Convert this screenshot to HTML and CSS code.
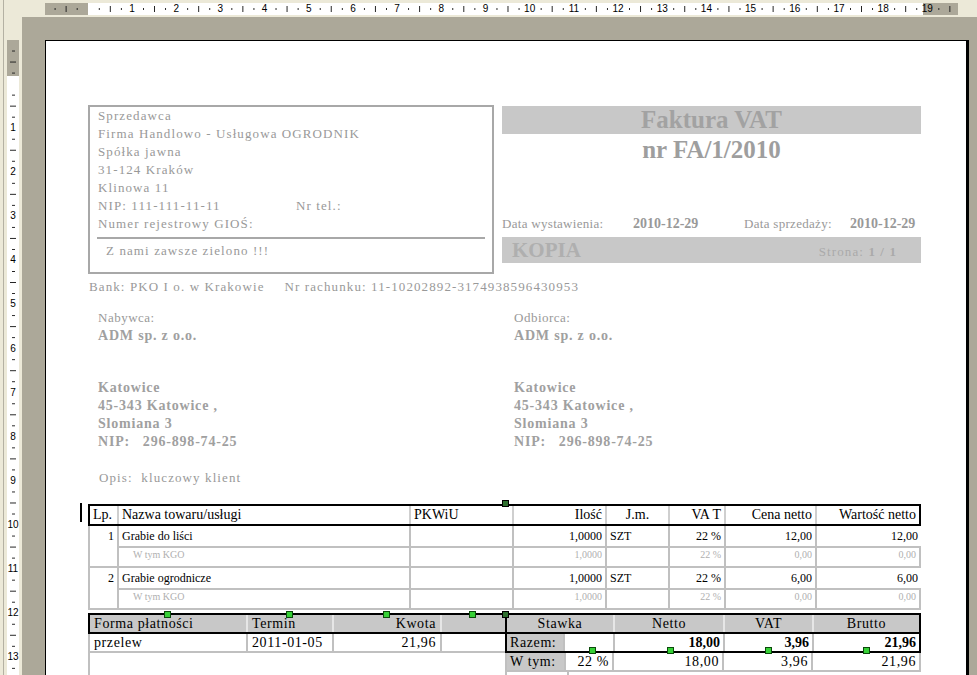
FILE: index.html
```html
<!DOCTYPE html>
<html lang="pl">
<head>
  <meta charset="UTF-8">
  <title>Faktura VAT - podgląd</title>
  <link rel="stylesheet" href="styles.css">
</head>
<body>
<div class="topbar">
  <div class="hruler">
    <span>1</span><span>2</span><span>3</span><span>4</span><span>5</span><span>6</span><span>7</span><span>8</span><span>9</span><span>10</span>
    <span>11</span><span>12</span><span>13</span><span>14</span><span>15</span><span>16</span><span>17</span><span>18</span><span>19</span>
  </div>
</div>

<div class="main">
  <div class="side">
    <div class="vruler">
      <span>1</span><span>2</span><span>3</span><span>4</span><span>5</span><span>6</span><span>7</span>
      <span>8</span><span>9</span><span>10</span><span>11</span><span>12</span><span>13</span>
    </div>
  </div>

  <div class="workspace">
    <div class="page">
      <div class="top">
        <div class="seller">
          <div>Sprzedawca</div>
          <div>Firma Handlowo - Usługowa OGRODNIK</div>
          <div>Spółka jawna</div>
          <div>31-124 Kraków</div>
          <div>Klinowa 11</div>
          <div class="nip-row"><span class="nip">NIP: 111-111-11-11</span><span>Nr tel.:</span></div>
          <div>Numer rejestrowy GIOŚ:</div>
          <div class="motto">Z nami zawsze zielono !!!</div>
        </div>

        <div class="doc">
          <div class="doc-title">Faktura VAT</div>
          <div class="doc-nr">nr FA/1/2010</div>
          <div class="dates">
            <span>Data wystawienia:</span><b>2010-12-29</b>
            <span>Data sprzedaży:</span><b>2010-12-29</b>
          </div>
          <div class="copy-bar">
            <span class="copy">KOPIA</span>
            <span class="page-no">Strona: <b>1 / 1</b></span>
          </div>
        </div>
      </div>

      <div class="bank"><span class="bank-name">Bank: PKO I o. w Krakowie</span><span>Nr rachunku: 11-10202892-3174938596430953</span></div>

      <div class="parties">
        <div class="party">
          <div>Nabywca:</div>
          <b>ADM sp. z o.o.</b>
          <b class="city">Katowice</b>
          <b>45-343 Katowice ,</b>
          <b>Slomiana 3</b>
          <b class="pre">NIP:   296-898-74-25</b>
        </div>
        <div class="party">
          <div>Odbiorca:</div>
          <b>ADM sp. z o.o.</b>
          <b class="city">Katowice</b>
          <b>45-343 Katowice ,</b>
          <b>Slomiana 3</b>
          <b class="pre">NIP:   296-898-74-25</b>
        </div>
      </div>

      <div class="note pre">Opis:  kluczowy klient</div>

      <div class="items">
        <i class="cursor"></i>
        <div class="items-head">
          <div>Lp.</div>
          <div>Nazwa towaru/usługi</div>
          <div>PKWiU</div>
          <div class="num">Ilość</div>
          <div class="mid">J.m.</div>
          <div class="num">VA T</div>
          <div class="num">Cena netto</div>
          <div class="num">Wartość netto</div>
        </div>

        <div class="item">
          <div class="lp">1</div>
          <div>Grabie do liści</div>
          <div></div>
          <div class="num">1,0000</div>
          <div>SZT</div>
          <div class="num">22 %</div>
          <div class="num">12,00</div>
          <div class="num">12,00</div>
          <div class="sub kgo">W tym KGO</div>
          <div class="sub"></div>
          <div class="sub num">1,0000</div>
          <div class="sub"></div>
          <div class="sub num">22 %</div>
          <div class="sub num">0,00</div>
          <div class="sub num last">0,00</div>
        </div>

        <div class="item">
          <div class="lp">2</div>
          <div>Grabie ogrodnicze</div>
          <div></div>
          <div class="num">1,0000</div>
          <div>SZT</div>
          <div class="num">22 %</div>
          <div class="num">6,00</div>
          <div class="num">6,00</div>
          <div class="sub kgo">W tym KGO</div>
          <div class="sub"></div>
          <div class="sub num">1,0000</div>
          <div class="sub"></div>
          <div class="sub num">22 %</div>
          <div class="sub num">0,00</div>
          <div class="sub num last">0,00</div>
        </div>
      </div>

      <div class="summary">
        <div class="payment">
          <div class="pay-head">
            <div>Forma płatności</div>
            <div>Termin</div>
            <div class="num">Kwota</div>
            <div></div>
          </div>
          <div class="pay-row">
            <div>przelew</div>
            <div>2011-01-05</div>
            <div class="num">21,96</div>
            <div></div>
          </div>
          <div class="pay-rest"></div>
        </div>

        <div class="vat">
          <div class="vat-box">
            <div class="vat-head">
              <div>Stawka</div>
              <div>Netto</div>
              <div>VAT</div>
              <div>Brutto</div>
            </div>
            <div class="vat-total">
              <div class="label">Razem:</div>
              <div></div>
              <div class="num">18,00</div>
              <div class="num">3,96</div>
              <div class="num">21,96</div>
            </div>
          </div>
          <div class="vat-row">
            <div class="label">W tym:</div>
            <div class="num">22 %</div>
            <div class="num">18,00</div>
            <div class="num">3,96</div>
            <div class="num">21,96</div>
          </div>
          <div class="vat-rest"><div></div></div>
        </div>
      </div>

      <!-- uchwyty zaznaczenia -->
      <i class="handle dark" style="left: 456px; top: 459px;"></i>
      <i class="handle" style="left: 118px; top: 570px;"></i>
      <i class="handle" style="left: 240px; top: 570px;"></i>
      <i class="handle" style="left: 337px; top: 570px;"></i>
      <i class="handle" style="left: 423px; top: 570px;"></i>
      <i class="handle dark" style="left: 456px; top: 570px;"></i>
      <i class="handle" style="left: 543px; top: 606px;"></i>
      <i class="handle" style="left: 621px; top: 606px;"></i>
      <i class="handle" style="left: 719px; top: 606px;"></i>
      <i class="handle" style="left: 817px; top: 606px;"></i>
    </div>
  </div>
</div>
</body>
</html>
```

FILE: styles.css
```css
body {
  margin: 0;
  height: 675px;
  overflow: hidden;
  background: #ece9d8 linear-gradient(to right, transparent 3px, #b4b1a3 3px, #b4b1a3 4px, transparent 4px);
  font-family: "Liberation Serif", "Times New Roman", serif;
  color: #999;
}

/* rulers */
.topbar {
  height: 17px;
  box-sizing: border-box;
  padding: 3px 0 0 45px;
}

.hruler {
  width: 913px;
  height: 12px;
  box-sizing: border-box;
  padding-left: 64.9px;
  display: flex;
  font: 10px/12px "Liberation Sans", Arial, sans-serif;
  color: #000;
  background:
    linear-gradient(to right, transparent 20.4px, #222 20.4px, #222 21.4px, transparent 21.4px) 0 center / 44.2px 6px repeat-x,
    linear-gradient(to right, transparent 9.3px, #222 9.3px, #222 10.3px, transparent 10.3px) 0 center / 22.1px 2px repeat-x,
    linear-gradient(to right, #aca899 43px, #fff 43px, #fff 878px, #aca899 878px);
}

.hruler span {
  flex: 0 0 44.2px;
  text-align: center;
}

.main {
  display: flex;
  height: 658px;
}

.side {
  width: 22px;
  flex-shrink: 0;
}

.vruler {
  margin: 23px 0 0 7px;
  width: 12px;
  height: 635px;
  box-sizing: border-box;
  padding-top: 66px;
  overflow: hidden;
  font: 10px/12px "Liberation Sans", Arial, sans-serif;
  color: #000;
  background:
    linear-gradient(to bottom, transparent 21.4px, #222 21.4px, #222 22.4px, transparent 22.4px) center 0 / 6px 44.1px repeat-y,
    linear-gradient(to bottom, transparent 10.4px, #222 10.4px, #222 11.4px, transparent 11.4px) center 0 / 3px 22.05px repeat-y,
    linear-gradient(to bottom, #aca899 36px, #fff 36px);
}

.vruler span {
  display: flex;
  align-items: center;
  justify-content: center;
  height: 44.1px;
}

.workspace {
  flex: 1;
  background: #aca899;
  padding: 23px 0 0 23px;
  overflow: hidden;
}

/* page */
.page {
  position: relative;
  width: 924px;
  height: 700px;
  box-sizing: border-box;
  background: #fff;
  border-top: 1px solid #000;
  border-left: 1px solid #000;
  border-right: 3px solid #000;
  padding: 64px 0 0 42px;
  font-size: 13px;
  line-height: 18px;
  letter-spacing: 1.1px;
}

.pre {
  white-space: pre;
}

.top {
  display: flex;
  gap: 8px;
  width: 833px;
}

.seller {
  width: 406px;
  height: 169px;
  box-sizing: border-box;
  border: 2px solid #a8a8a8;
  padding-left: 8px;
}

.nip-row {
  display: flex;
}

.nip {
  width: 198px;
}

.motto {
  margin: 4px 7px 0 -1px;
  padding: 3px 0 0 9px;
  border-top: 2px solid #a8a8a8;
}

.doc {
  width: 419px;
}

.doc-title {
  margin-top: 1px;
  height: 28px;
  background: #c8c8c8;
  color: #a2a2a2;
  font-size: 25px;
  font-weight: bold;
  line-height: 28px;
  letter-spacing: 0;
  text-align: center;
}

.doc-nr {
  color: #9e9e9e;
  font-size: 25px;
  font-weight: bold;
  line-height: 32px;
  letter-spacing: 0;
  text-align: center;
}

.dates {
  margin-top: 49px;
  display: grid;
  grid-template-columns: 131px 111px 106px 1fr;
  font-size: 13px;
  letter-spacing: 0.3px;
}

.dates b {
  font-size: 14px;
  letter-spacing: 0;
}

.copy-bar {
  margin-top: 4px;
  height: 26px;
  background: #c8c8c8;
  display: flex;
  align-items: center;
  justify-content: space-between;
  padding: 0 24px 0 10px;
}

.copy {
  font-size: 21px;
  font-weight: bold;
  letter-spacing: 0;
  color: #afafaf;
}

.page-no {
  padding-top: 4px;
  color: #aaa;
}

.bank {
  margin-top: 4px;
  padding-left: 1px;
}

.bank-name {
  margin-right: 20px;
}

.parties {
  margin-top: 13px;
  display: grid;
  grid-template-columns: 416px 1fr;
}

.party {
  display: flex;
  flex-direction: column;
  padding-left: 10px;
  letter-spacing: 0.5px;
}

.party b {
  color: #a0a0a0;
  font-size: 14px;
  letter-spacing: 0.8px;
}

.party .city {
  margin-top: 34px;
}

.note {
  margin-top: 18px;
  padding-left: 11px;
}

/* items table */
.items {
  position: relative;
  margin-top: 17px;
  width: 833px;
  color: #000;
  letter-spacing: 0;
}

.cursor {
  position: absolute;
  left: -8px;
  top: -1px;
  width: 2px;
  height: 19px;
  background: #000;
}

.items-head {
  display: grid;
  grid-template-columns: 27px 292px 103px 93px 63px 56px 91px 104px;
  height: 22px;
  box-sizing: border-box;
  border: 2px solid #000;
  font-size: 14px;
}

.items-head div + div {
  border-left: 2px solid #cfcfcf;
}

.items-head div {
  padding: 0 3px;
}

.num {
  text-align: right;
}

.mid {
  text-align: center;
}

.item {
  display: grid;
  grid-template-columns: 27px 292px 103px 93px 63px 56px 91px 106px;
  grid-template-rows: 20px 20px;
  border-left: 2px solid #c0c0c0;
  border-bottom: 2px solid #c0c0c0;
  font-size: 12px;
}

.item div {
  box-sizing: border-box;
  padding: 0 3px;
  border-left: 2px solid #c0c0c0;
  line-height: 21px;
}

.item .lp {
  grid-row: span 2;
  border-left: 0;
  text-align: right;
}

.item .sub {
  border-top: 2px solid #c0c0c0;
  font-size: 10px;
  line-height: 13px;
  color: #b0b0b0;
}

.item .kgo {
  padding-left: 14px;
}

.item .last {
  border-right: 2px solid #c0c0c0;
}

/* summary */
.summary {
  display: flex;
  margin-top: 3px;
  width: 833px;
  color: #000;
  font-size: 14px;
  line-height: 17px;
  letter-spacing: 0.6px;
}

.payment {
  width: 417px;
}

.pay-head,
.pay-row {
  display: grid;
  grid-template-columns: 156px 86px 108px 65px;
}

.pay-head {
  border: 2px solid #000;
  border-right: 0;
  background: #c8c8c8;
}

.pay-head div,
.pay-row div {
  padding: 0 4px;
}

.pay-head div + div {
  border-left: 2px solid #e6e6e6;
}

.pay-row {
  border-left: 2px solid #c0c0c0;
  border-bottom: 2px solid #c0c0c0;
}

.pay-row div + div {
  border-left: 2px solid #c0c0c0;
}

.pay-rest {
  height: 40px;
  border-left: 2px solid #c0c0c0;
}

.vat {
  width: 416px;
}

.vat-box {
  border: 2px solid #000;
}

.vat-head {
  display: grid;
  grid-template-columns: 106px 110px 89px 107px;
  background: #c8c8c8;
  text-align: center;
}

.vat-head div + div {
  border-left: 2px solid #e6e6e6;
}

.vat-total {
  display: grid;
  grid-template-columns: 56px 50px 110px 89px 107px;
  border-top: 2px solid #000;
  font-weight: bold;
  letter-spacing: 0;
}

.vat-total div,
.vat-row div {
  padding: 0 3px;
}

.vat-total div + div,
.vat-row div + div {
  border-left: 2px solid #c0c0c0;
}

.vat-total .label,
.vat-row .label {
  background: #c8c8c8;
  font-weight: normal;
  letter-spacing: 0.6px;
}

.vat-row {
  display: grid;
  grid-template-columns: 57px 48px 110px 89px 108px;
  border-left: 2px solid #c0c0c0;
  border-right: 2px solid #c0c0c0;
  border-bottom: 2px solid #c0c0c0;
}

.vat-rest {
  height: 30px;
  border-left: 2px solid #c0c0c0;
}

.vat-rest div {
  margin-left: 60px;
  height: 100%;
  border-left: 2px solid #c0c0c0;
}

.handle {
  position: absolute;
  width: 5px;
  height: 5px;
  border: 1px solid #0b4a0b;
  background: #36d036;
}

.handle.dark {
  border-color: #000;
  background: #2f6f2f;
}
```
